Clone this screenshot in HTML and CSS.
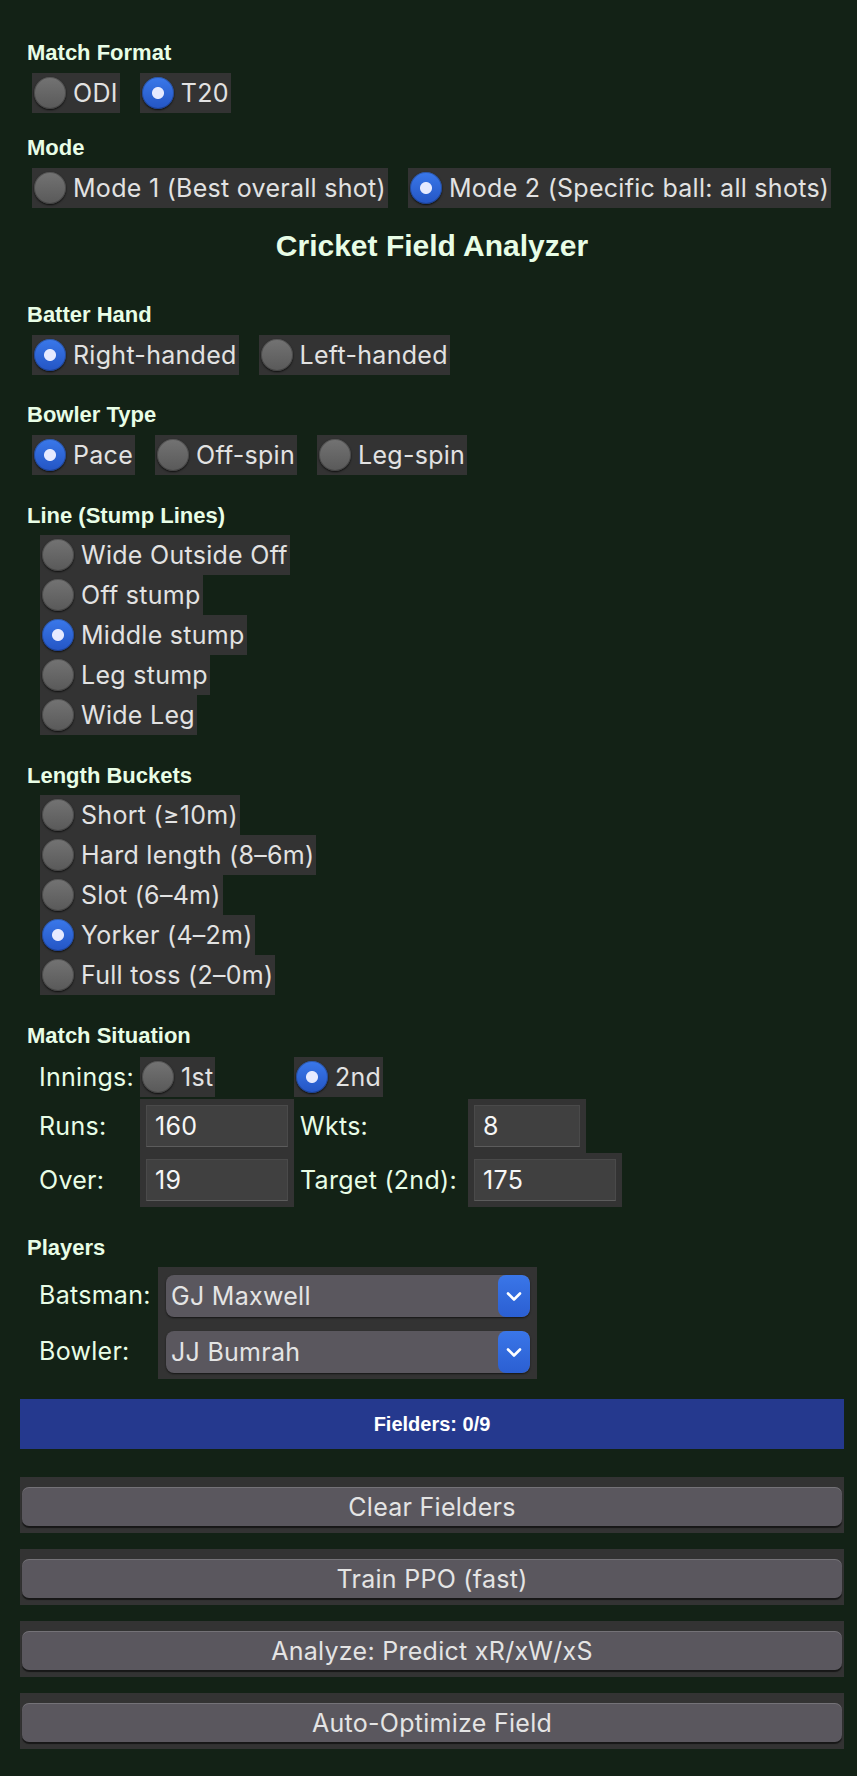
FILE: index.html
```html
<!DOCTYPE html>
<html lang="en">
<head>
<meta charset="utf-8">
<title>Cricket Field Analyzer</title>
<link rel="stylesheet" href="styles.css">
</head>
<body>
<div class="app">
  <section class="sec sec-first">
    <div class="sec-label">Match Format</div>
    <div class="opts-row">
      <label class="opt"><input class="rb" type="radio" name="fmt">ODI</label>
      <label class="opt"><input class="rb" type="radio" name="fmt" checked>T20</label>
    </div>
  </section>

  <section class="sec sec-mode">
    <div class="sec-label">Mode</div>
    <div class="opts-row">
      <label class="opt"><input class="rb" type="radio" name="mode">Mode 1 (Best overall shot)</label>
      <label class="opt"><input class="rb" type="radio" name="mode" checked>Mode 2 (Specific ball: all shots)</label>
    </div>
  </section>

  <h1 class="title">Cricket Field Analyzer</h1>

  <section class="sec sec-batter">
    <div class="sec-label">Batter Hand</div>
    <div class="opts-row">
      <label class="opt"><input class="rb" type="radio" name="hand" checked>Right-handed</label>
      <label class="opt"><input class="rb" type="radio" name="hand">Left-handed</label>
    </div>
  </section>

  <section class="sec sec-bowler">
    <div class="sec-label">Bowler Type</div>
    <div class="opts-row">
      <label class="opt"><input class="rb" type="radio" name="bt" checked>Pace</label>
      <label class="opt"><input class="rb" type="radio" name="bt">Off-spin</label>
      <label class="opt"><input class="rb" type="radio" name="bt">Leg-spin</label>
    </div>
  </section>

  <section class="sec sec-list">
    <div class="sec-label">Line (Stump Lines)</div>
    <div class="opts-col">
      <label class="opt"><input class="rb" type="radio" name="line">Wide Outside Off</label>
      <label class="opt"><input class="rb" type="radio" name="line">Off stump</label>
      <label class="opt"><input class="rb" type="radio" name="line" checked>Middle stump</label>
      <label class="opt"><input class="rb" type="radio" name="line">Leg stump</label>
      <label class="opt"><input class="rb" type="radio" name="line">Wide Leg</label>
    </div>
  </section>

  <section class="sec sec-list">
    <div class="sec-label">Length Buckets</div>
    <div class="opts-col">
      <label class="opt"><input class="rb" type="radio" name="len">Short (≥10m)</label>
      <label class="opt"><input class="rb" type="radio" name="len">Hard length (8–6m)</label>
      <label class="opt"><input class="rb" type="radio" name="len">Slot (6–4m)</label>
      <label class="opt"><input class="rb" type="radio" name="len" checked>Yorker (4–2m)</label>
      <label class="opt"><input class="rb" type="radio" name="len">Full toss (2–0m)</label>
    </div>
  </section>

  <section class="sec sec-ms">
    <div class="sec-label">Match Situation</div>
    <div class="ms-grid">
      <div class="ms-lbl ms-top">Innings:</div>
      <label class="opt ms-top"><input class="rb" type="radio" name="inn">1st</label>
      <label class="opt ms-top"><input class="rb" type="radio" name="inn" checked>2nd</label>
      <div></div>

      <div class="ms-lbl">Runs:</div>
      <div class="cell"><input class="num num-wide" type="text" value="160"></div>
      <div class="ms-lbl">Wkts:</div>
      <div class="cell"><input class="num num-short" type="text" value="8"></div>

      <div class="ms-lbl">Over:</div>
      <div class="cell"><input class="num num-wide" type="text" value="19"></div>
      <div class="ms-lbl">Target (2nd):</div>
      <div class="cell"><input class="num num-wide" type="text" value="175"></div>
    </div>
  </section>

  <section class="sec sec-players">
    <div class="sec-label">Players</div>
    <div class="pl-grid">
      <div class="ms-lbl">Batsman:</div>
      <div class="pl-cell">
        <div class="sel">
          <select><option>GJ Maxwell</option></select>
          <span class="chev"><svg width="16" height="11" viewBox="0 0 16 11"><path d="M2 2.5 L8 8.5 L14 2.5" fill="none" stroke="#fff" stroke-width="2.6" stroke-linecap="round" stroke-linejoin="round"/></svg></span>
        </div>
      </div>
      <div class="ms-lbl">Bowler:</div>
      <div class="pl-cell">
        <div class="sel">
          <select><option>JJ Bumrah</option></select>
          <span class="chev"><svg width="16" height="11" viewBox="0 0 16 11"><path d="M2 2.5 L8 8.5 L14 2.5" fill="none" stroke="#fff" stroke-width="2.6" stroke-linecap="round" stroke-linejoin="round"/></svg></span>
        </div>
      </div>
    </div>
  </section>

  <div class="band">Fielders: 0/9</div>

  <div class="btn-wrap"><button class="btn">Clear Fielders</button></div>
  <div class="btn-wrap"><button class="btn">Train PPO (fast)</button></div>
  <div class="btn-wrap"><button class="btn">Analyze: Predict xR/xW/xS</button></div>
  <div class="btn-wrap"><button class="btn">Auto-Optimize Field</button></div>
</div>
</body>
</html>
```

FILE: styles.css
```css
html, body {
  margin: 0;
  padding: 0;
  background: #132216;
}

body {
  font-family: Inter, "Noto Sans", sans-serif;
  color: #e2e2e2;
}

.app {
  width: 824px;
  padding: 42px 0 40px 20px;
}

.sec-label {
  font: bold 22px/22px "Liberation Sans", Arial, sans-serif;
  color: #e8fde6;
  margin: 0 0 9px 7px;
}

.sec-mode { margin-top: 24px; }
.sec-batter { margin-top: 40px; }
.sec-bowler { margin-top: 29px; }
.sec-list { margin-top: 30px; }
.sec-list .sec-label { margin-bottom: 8px; }
.sec-ms { margin-top: 30px; }
.sec-ms .sec-label { margin-bottom: 10px; }
.sec-players { margin-top: 30px; }
.sec-players .sec-label { margin-bottom: 8px; }

.title {
  margin: 20px 0 0;
  font: bold 30px/36px "Liberation Sans", Arial, sans-serif;
  color: #e8fde6;
  text-align: center;
}

.opts-row {
  display: flex;
  gap: 20px;
  margin-left: 12px;
}

.opts-col {
  display: flex;
  flex-direction: column;
  align-items: flex-start;
  margin-left: 20px;
}

.opt {
  display: inline-flex;
  align-items: center;
  gap: 7px;
  height: 40px;
  padding: 0 2px;
  background: #333333;
  font-size: 25px;
  letter-spacing: 0.28px;
  color: #e2e2e2;
  white-space: nowrap;
  box-sizing: border-box;
}

.rb {
  appearance: none;
  -webkit-appearance: none;
  margin: 0;
  width: 32px;
  height: 32px;
  border-radius: 50%;
  flex: none;
  background: linear-gradient(#737373, #595959);
  box-shadow: 0 1px 2px rgba(0, 0, 0, 0.75), inset 0 0 0 1px rgba(0, 0, 0, 0.25);
}

.rb:checked {
  background:
    radial-gradient(circle at 50% 50%, #e6eaff 0 5.5px, transparent 6.5px),
    linear-gradient(#3a78ea, #2455c4);
}

/* Match situation grid */
.ms-grid {
  display: grid;
  grid-template-columns: 107px 154px 174px 154px;
  grid-template-rows: 42px 54px 54px;
  margin-left: 13px;
}

.ms-lbl {
  display: flex;
  align-items: center;
  padding: 0 6px;
  font-size: 25px;
  letter-spacing: 0.28px;
  color: #e8fde6;
  white-space: nowrap;
}

.ms-top {
  align-self: start;
  justify-self: start;
  height: 40px;
}

.cell {
  justify-self: start;
  background: #333333;
  padding: 6px;
}

.num {
  box-sizing: border-box;
  height: 42px;
  margin: 0;
  padding: 0 8px;
  border: 1px solid #4a4a4a;
  border-bottom-color: #5c5c5c;
  background: #404040;
  color: #f6f6f6;
  font: 25px Inter, "Noto Sans", sans-serif;
  letter-spacing: 0.28px;
  outline: none;
}

.num-wide { width: 142px; }
.num-short { width: 106px; }

/* Players */
.pl-grid {
  display: grid;
  grid-template-columns: 125px 379px;
  grid-template-rows: 56px 56px;
  margin-left: 13px;
}

.pl-cell {
  background: #333333;
  padding: 8px 7px 6px 8px;
}

.sel {
  display: flex;
  height: 42px;
  border-radius: 8px;
  background: #5a575e;
  box-shadow: 0 1px 2px rgba(0, 0, 0, 0.6);
  overflow: hidden;
}

.sel select {
  flex: 1;
  appearance: none;
  -webkit-appearance: none;
  border: none;
  background: transparent;
  color: #e4e4e4;
  font: 25px Inter, "Noto Sans", sans-serif;
  letter-spacing: 0.28px;
  padding: 0 5px;
  margin: 0;
  outline: none;
}

.chev {
  width: 32px;
  flex: none;
  display: flex;
  align-items: center;
  justify-content: center;
  background: linear-gradient(#3a76e8, #2b5fd2);
  border-radius: 8px;
}

/* Band */
.band {
  margin-top: 20px;
  height: 50px;
  display: flex;
  align-items: center;
  justify-content: center;
  background: #25398e;
  color: #ffffff;
  font: bold 20px "Liberation Sans", Arial, sans-serif;
}

/* Buttons */
.btn-wrap {
  margin-top: 16px;
  background: #333333;
  padding: 10px 2px 7px;
}

.band + .btn-wrap { margin-top: 28px; }

.btn {
  display: block;
  width: 100%;
  height: 39px;
  border: none;
  border-radius: 7px;
  background: #5a575e;
  color: #e4e4e4;
  font: 25px Inter, "Noto Sans", sans-serif;
  letter-spacing: 0.28px;
  box-shadow: inset 0 1px 0 rgba(255, 255, 255, 0.16), 0 2px 1px rgba(0, 0, 0, 0.55);
  padding: 0;
}
```
